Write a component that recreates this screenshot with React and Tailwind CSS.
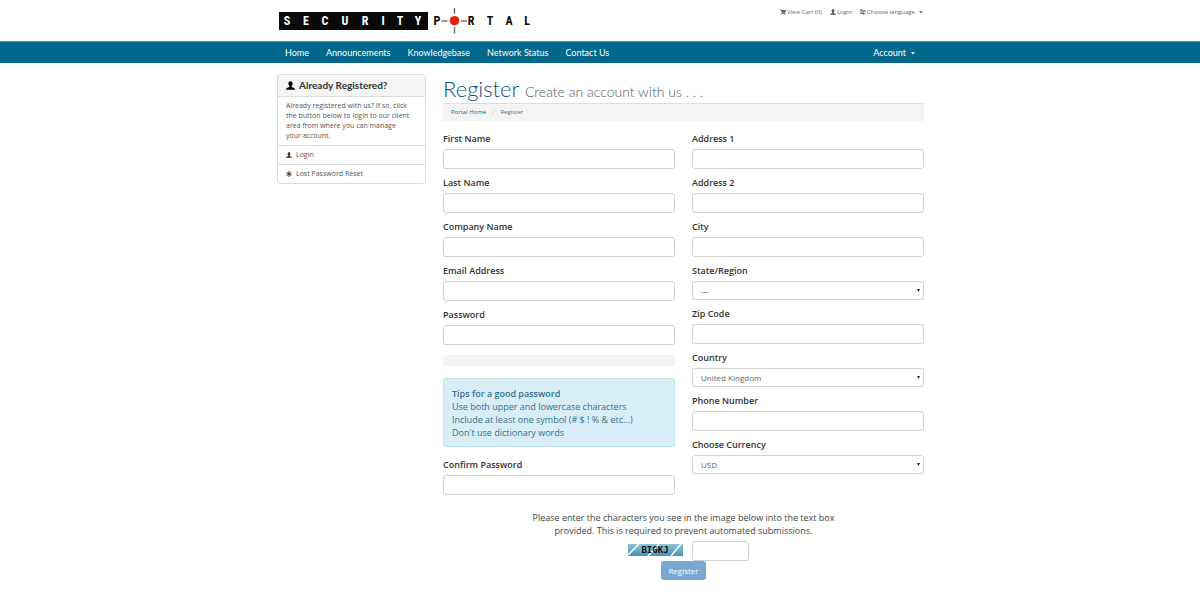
/**
 * @file App.jsx
 * @description Client area registration page: logo header, main nav,
 * login sidebar, and the two-column sign-up form.
 */

import { FaShoppingCart, FaAsterisk, FaCaretDown } from 'react-icons/fa';
import { MdGTranslate } from 'react-icons/md';

const NAV_LINKS = ['Home', 'Announcements', 'Knowledgebase', 'Network Status', 'Contact Us'];

const LEFT_FIELDS = [
  { id: 'firstname', label: 'First Name' },
  { id: 'lastname', label: 'Last Name' },
  { id: 'companyname', label: 'Company Name' },
  { id: 'email', label: 'Email Address', type: 'email' },
  { id: 'password', label: 'Password', type: 'password' },
];

const RIGHT_FIELDS = [
  { id: 'address1', label: 'Address 1' },
  { id: 'address2', label: 'Address 2' },
  { id: 'city', label: 'City' },
  { id: 'state', label: 'State/Region', options: ['—'] },
  { id: 'postcode', label: 'Zip Code' },
  { id: 'country', label: 'Country', options: ['United Kingdom'] },
  { id: 'phonenumber', label: 'Phone Number', type: 'tel' },
  { id: 'currency', label: 'Choose Currency', options: ['USD'] },
];

function Logo() {
  return (
    <svg width="254" height="28" viewBox="278 7 254 28" role="img" aria-label="Security Portal">
      <rect x="279" y="12" width="149" height="18" fill="#0a0a0a" />
      <g
        fontFamily="'Roboto Condensed', 'Liberation Sans Narrow', Roboto, sans-serif"
        fontWeight="700"
        fontSize="12"
        textAnchor="middle"
      >
        <text y="25" fill="#fff" x="287 306 325 345 365 383 400 418">SECURITY</text>
        <text y="25" fill="#0a0a0a" x="437">P</text>
        <text y="25" fill="#0a0a0a" x="471 490 509 527">RTAL</text>
      </g>
      <path d="M454.5 8v6M454.5 27v6.500M441.500 21h6M461 21h6" stroke="#777" strokeWidth="1.500" />
      <circle cx="454.500" cy="20.700" r="4.800" fill="#dc2316" />
    </svg>
  );
}

function UserIcon({ className }) {
  return (
    <svg viewBox="0 0 18 18" fill="currentColor" className={className} aria-hidden="true">
      <path d="M9 0.500c2.600 0 4.300 1.900 4.300 4.600 0 1.900-.8 3.700-2 4.700v1.300c0 .7.300 1 1 1.300l4 1.600c.8.400 1.200.9 1.200 1.700v1.800H.5v-1.800c0-.8.400-1.300 1.200-1.700l4-1.600c.7-.3 1-.6 1-1.300V9.800c-1.200-1-2-2.800-2-4.700C4.700 2.400 6.400.5 9 .5z" />
    </svg>
  );
}

function Field({ id, label, type = 'text', options }) {
  return (
    <div className="flex flex-col gap-1">
      <label htmlFor={id} className="text-[9px] leading-3 font-semibold text-[#333]">
        {label}
      </label>
      {options ? (
        <div className="relative">
          <select
            id={id}
            className="block h-[19px] w-full appearance-none rounded-[3px] border border-[#d0d0d0] bg-white px-2 text-[8px] text-[#666]"
          >
            {options.map((option) => (
              <option key={option}>{option}</option>
            ))}
          </select>
          <svg
            viewBox="0 0 4 4"
            className="pointer-events-none absolute top-2 right-1 size-[3px]"
            aria-hidden="true"
          >
            <path d="M0 0h4L2 4z" fill="#222" />
          </svg>
        </div>
      ) : (
        <input
          id={id}
          type={type}
          className="block h-5 w-full rounded-[3px] border border-[#d0d0d0] bg-white px-2 text-[8px] text-[#666]"
        />
      )}
    </div>
  );
}

function TopBar() {
  return (
    <header className="mx-auto flex h-[41px] w-full max-w-[648px] items-start justify-between pl-px">
      <a href="#" className="mt-[7px] ml-px">
        <Logo />
      </a>
      <div className="mt-2 flex gap-2 text-[6px] leading-2 text-[#666]">
        <a href="#" className="flex items-center gap-px">
          <FaShoppingCart /> View Cart (0)
        </a>
        <a href="#" className="flex items-center gap-px">
          <UserIcon className="size-[6px] text-[#555]" /> Login
        </a>
        <button type="button" className="flex items-center gap-px">
          <MdGTranslate /> Choose language <FaCaretDown className="ml-0.5" />
        </button>
      </div>
    </header>
  );
}

function MainNav() {
  return (
    <nav className="border-t border-[#4f93ab] bg-[#00668a] font-[Lato,sans-serif] text-[9px] leading-[21px] text-white">
      <div className="mx-auto flex w-full max-w-[648px] justify-between pr-2 pl-[9px]">
        <div className="flex gap-[17px]">
          {NAV_LINKS.map((link) => (
            <a key={link} href="#">
              {link}
            </a>
          ))}
        </div>
        <button type="button" className="flex items-center gap-1">
          Account <FaCaretDown className="size-[6px]" />
        </button>
      </div>
    </nav>
  );
}

function Sidebar() {
  return (
    <aside className="w-[149px] shrink-0 self-start rounded-[3px] border border-[#ddd] text-[7px] text-[#555]">
      <h2 className="flex h-[22px] items-center gap-1 border-b border-[#ddd] bg-[#f4f4f4] px-2 font-[Lato,sans-serif] text-[10px] font-bold text-[#333]">
        <UserIcon className="size-[9px] text-black" /> Already Registered?
      </h2>
      <p className="py-1 pr-[14px] pl-2 leading-[10px]">
        Already registered with us? If so, click the button below to login to our client area from
        where you can manage your account.
      </p>
      <a href="#" className="flex h-[19px] items-center gap-1 border-t border-[#ddd] px-2">
        <UserIcon className="size-[6px] text-[#333]" /> Login
      </a>
      <a href="#" className="flex h-[19px] items-center gap-1 border-t border-[#ddd] px-2">
        <FaAsterisk className="size-[6px] text-[#333]" /> Lost Password Reset
      </a>
    </aside>
  );
}

function PasswordTips() {
  return (
    <div className="rounded-[3px] border border-[#bce8f1] bg-[#d9edf7] px-2 pt-2 pb-[7px] text-[9px] leading-[13px] text-[#31708f]">
      <strong className="font-semibold">Tips for a good password</strong>
      <p>Use both upper and lowercase characters</p>
      <p>Include at least one symbol (# $ ! % &amp; etc...)</p>
      <p>Don't use dictionary words</p>
    </div>
  );
}

function Captcha() {
  return (
    <svg width="55" height="12" viewBox="0 0 55 12" role="img" aria-label="Captcha">
      <defs>
        <linearGradient id="captcha-bg" x1="0" y1="0" x2="0" y2="1">
          <stop offset="0" stopColor="#8cc4d8" />
          <stop offset="1" stopColor="#4a8fb8" />
        </linearGradient>
      </defs>
      <rect width="55" height="12" fill="url(#captcha-bg)" />
      <path d="M0 11L11 0M20 12L31 0M43 12L53 0" stroke="#fff" strokeWidth="1.500" />
      <text
        x="27"
        y="9"
        textAnchor="middle"
        fontFamily="'DejaVu Sans Mono', monospace"
        fontWeight="700"
        fontSize="9"
        fill="#111"
      >
        BIGKJ
      </text>
    </svg>
  );
}

export default function App() {
  return (
    <div className="min-h-screen bg-white font-['Open_Sans',sans-serif]">
      <TopBar />
      <MainNav />
      <div className="mx-auto flex w-full max-w-[648px] gap-[17px] pt-[11px] pl-px">
        <Sidebar />
        <main className="min-w-0 flex-1">
          <h1 className="font-[Lato,sans-serif] text-[22px] leading-[29px] font-light text-[#0b527a]">
            Register{' '}
            <small className="text-[14px] leading-none text-[#555]">
              Create an account with us . . .
            </small>
          </h1>
          <ol className="flex h-[18px] items-center border-t border-[#ddd] bg-[#f4f4f4] px-2 text-[6px] text-[#666]">
            <li>
              <a href="#" className="text-[#17678c]">
                Portal Home
              </a>
            </li>
            <li className="px-[6px] text-[#bbb]">/</li>
            <li>Register</li>
          </ol>

          <form className="mt-3">
            <div className="grid grid-cols-2 gap-x-[17px]">
              <div className="flex flex-col gap-2">
                {LEFT_FIELDS.map((field) => (
                  <Field key={field.id} {...field} />
                ))}
                <div className="mt-0.5 h-[11px] rounded-xs bg-[#f4f4f4]" />
                <div className="my-1">
                  <PasswordTips />
                </div>
                <Field id="password2" label="Confirm Password" type="password" />
              </div>
              <div className="flex flex-col gap-2">
                {RIGHT_FIELDS.map((field) => (
                  <Field key={field.id} {...field} />
                ))}
              </div>
            </div>

            <div className="mt-4 flex flex-col items-center">
              <label
                htmlFor="code"
                className="max-w-[320px] text-center text-[9px] leading-[13px] text-[#444]"
              >
                Please enter the characters you see in the image below into the text box provided.
                This is required to prevent automated submissions.
              </label>
              <div className="mt-1 flex gap-[9px] pl-[9px]">
                <div className="pt-[3px]">
                  <Captcha />
                </div>
                <input
                  id="code"
                  type="text"
                  className="h-5 w-[57px] rounded-[3px] border border-[#d0d0d0] px-1 text-[8px]"
                />
              </div>
              <button
                type="submit"
                className="h-[19px] rounded-[3px] bg-[#7aa6d2] px-[7px] text-[8px] text-white"
              >
                Register
              </button>
            </div>
          </form>
        </main>
      </div>
    </div>
  );
}
